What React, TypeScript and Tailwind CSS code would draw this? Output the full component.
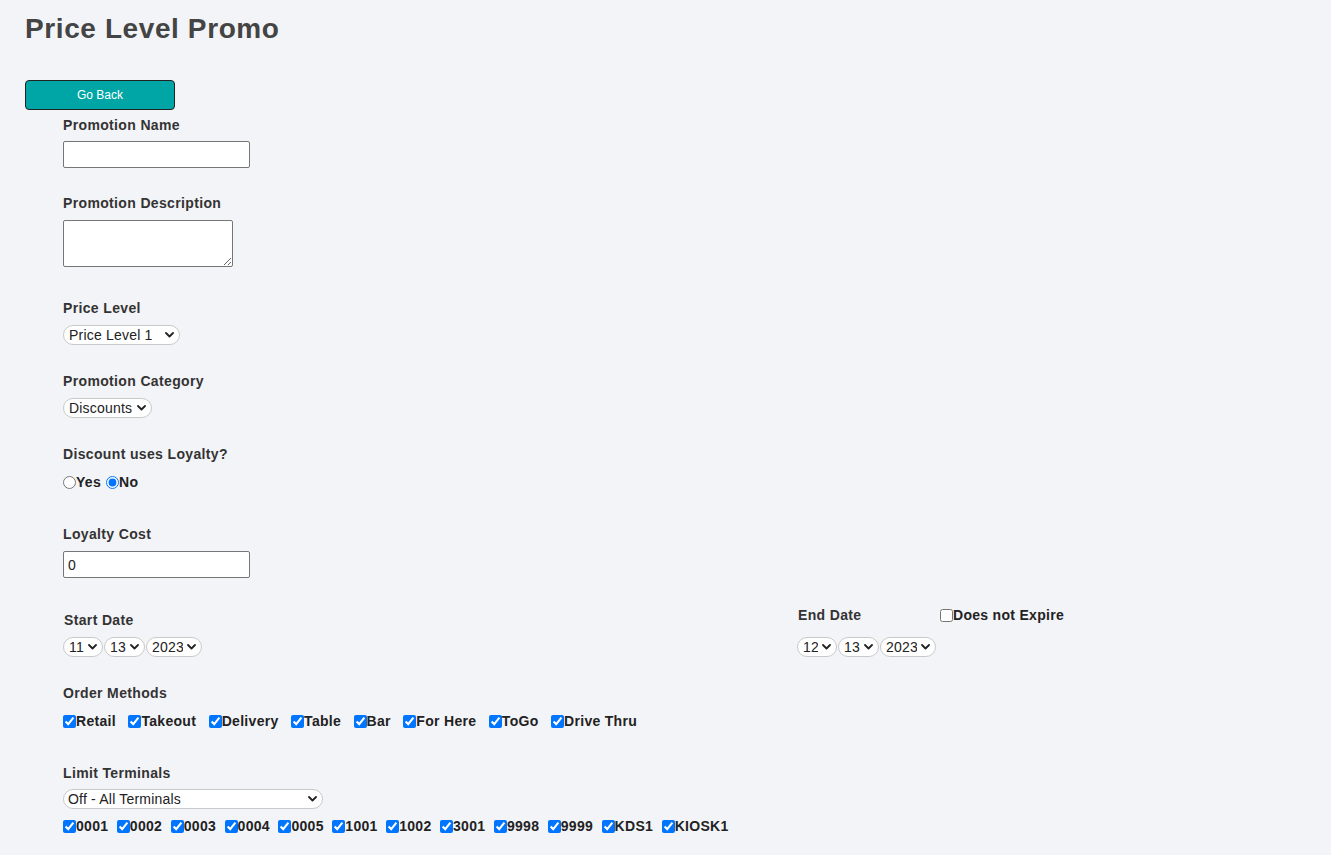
import React from 'react'

const orderMethods = ['Retail', 'Takeout', 'Delivery', 'Table', 'Bar', 'For Here', 'ToGo', 'Drive Thru']
const terminals = ['0001', '0002', '0003', '0004', '0005', '1001', '1002', '3001', '9998', '9999', 'KDS1', 'KIOSK1']

function Chevron() {
  return (
    <svg width="9" height="6" viewBox="0 0 9 6" className="pointer-events-none absolute right-[6px] top-[7px]">
      <path d="M1 1l3.5 3.5L8 1" fill="none" stroke="#222" strokeWidth="1.8" strokeLinecap="round" strokeLinejoin="round" />
    </svg>
  )
}

function Select({ value, width, pl = 'pl-[5px]' }: { value: string; width: string; pl?: string }) {
  return (
    <span className={`relative block h-[20px] ${width}`}>
      <select
        defaultValue={value}
        className={`block h-[20px] w-full appearance-none rounded-[10px] border border-[#c9c9c9] bg-white ${pl} pr-[18px] py-0 text-[14px] leading-[16px] tracking-[0.2px] text-[#222]`}
      >
        <option>{value}</option>
      </select>
      <Chevron />
    </span>
  )
}

function Label({ children, className = '' }: { children: React.ReactNode; className?: string }) {
  return (
    <div className={`h-[16px] text-[14px] font-bold leading-[16px] tracking-[0.35px] text-[#333] ${className}`}>
      {children}
    </div>
  )
}

function Check({ label, gap, checked = true }: { label: string; gap: string; checked?: boolean }) {
  return (
    <label className={`inline-flex items-center ${gap}`}>
      <input type="checkbox" defaultChecked={checked} className="m-0 h-[13px] w-[13px]" />
      <span className="text-[14px] font-bold leading-[16px] tracking-[0.3px] text-[#222]">{label}</span>
    </label>
  )
}

export default function App() {
  return (
    <div className="min-h-[855px] bg-[#f3f4f8] pl-[25px] font-['Liberation_Sans',Arial,sans-serif] text-[#333]">
      <h1 className="pt-[13px] text-[28px] font-bold leading-[32px] tracking-[0.6px] text-[#444]">Price Level Promo</h1>

      <button className="mt-[35px] h-[30px] w-[150px] rounded-[4px] border border-[#222] bg-[#00a6a6] pb-[1px] text-[12px] text-white">
        Go Back
      </button>

      <div className="pl-[38px]">
        <Label className="mt-[7px]">Promotion Name</Label>
        <input type="text" className="mt-[8px] block h-[27px] w-[187px] rounded-[2px] border border-[#767676] bg-white" />

        <Label className="mt-[27px]">Promotion Description</Label>
        <textarea className="mt-[9px] block h-[47px] w-[170px] rounded-[2px] border border-[#767676] bg-white" />

        <Label className="mt-[33px]">Price Level</Label>
        <div className="mt-[9px] flex">
          <Select value="Price Level 1" width="w-[117px]" />
        </div>

        <Label className="mt-[28px]">Promotion Category</Label>
        <div className="mt-[9px] flex">
          <Select value="Discounts" width="w-[89px]" />
        </div>

        <Label className="mt-[28px]">Discount uses Loyalty?</Label>
        <div className="mt-[12px] flex h-[16px] items-center text-[14px] font-bold tracking-[0.3px] text-[#222]">
          <input type="radio" name="loyalty" className="m-0 h-[13px] w-[13px]" />
          <span className="mr-[5px]">Yes</span>
          <input type="radio" name="loyalty" defaultChecked className="m-0 h-[13px] w-[13px]" />
          <span>No</span>
        </div>

        <Label className="mt-[36px]">Loyalty Cost</Label>
        <input
          type="text"
          defaultValue="0"
          className="mt-[9px] block h-[27px] w-[187px] rounded-[2px] border border-[#767676] bg-white px-[4px] text-[14px] text-[#222]"
        />

        <div className="flex">
          <div className="w-[734px]">
            <Label className="mt-[34px] pl-[1px]">Start Date</Label>
            <div className="mt-[9px] flex gap-[1px]">
              <Select value="11" width="w-[40px]" />
              <Select value="13" width="w-[41px]" />
              <Select value="2023" width="w-[56px]" />
            </div>
          </div>
          <div>
            <div className="mt-[29px] flex items-center">
              <Label className="w-[143px] pl-[1px]">End Date</Label>
              <Check label="Does not Expire" gap="" checked={false} />
            </div>
            <div className="mt-[14px] flex gap-[1px]">
              <Select value="12" width="w-[40px]" />
              <Select value="13" width="w-[41px]" />
              <Select value="2023" width="w-[56px]" />
            </div>
          </div>
        </div>

        <Label className="mt-[28px]">Order Methods</Label>
        <div className="mt-[12px] flex h-[16px]">
          {orderMethods.map((m) => (
            <Check key={m} label={m} gap="mr-[12.5px]" />
          ))}
        </div>

        <Label className="mt-[36px]">Limit Terminals</Label>
        <div className="mt-[8px] flex">
          <Select value="Off - All Terminals" width="w-[260px]" pl="pl-[4px]" />
        </div>
        <div className="mt-[9px] flex h-[16px]">
          {terminals.map((t) => (
            <Check key={t} label={t} gap="mr-[8.5px]" />
          ))}
        </div>
      </div>
    </div>
  )
}
